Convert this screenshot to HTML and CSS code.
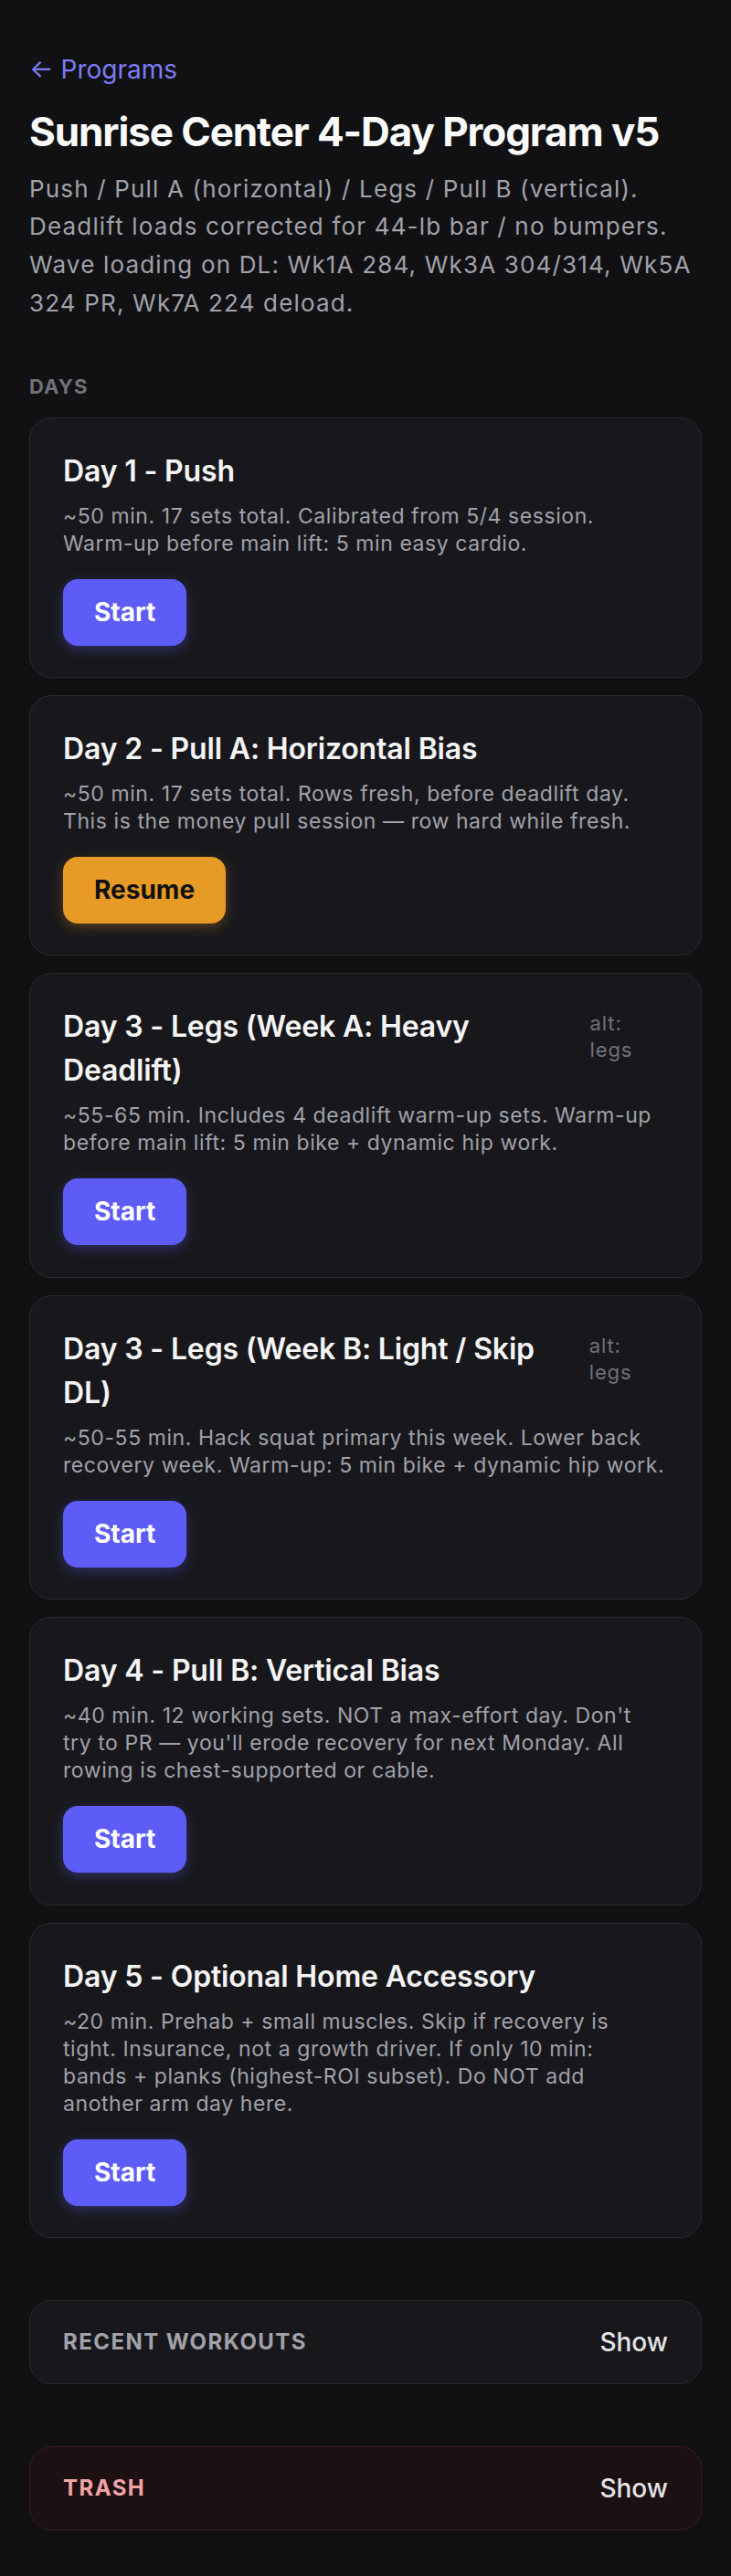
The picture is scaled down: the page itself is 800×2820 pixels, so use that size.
FILE: index.html
```html
<!DOCTYPE html>
<html lang="en">
<head>
<meta charset="utf-8">
<title>Sunrise Center 4-Day Program v5</title>
<link rel="stylesheet" href="styles.css">
</head>
<body>
<main class="page">
  <a class="back" href="#">← Programs</a>
  <h1 class="title">Sunrise Center 4-Day Program v5</h1>
  <p class="intro">Push / Pull A (horizontal) / Legs / Pull B (vertical). Deadlift loads corrected for 44-lb bar / no bumpers. Wave loading on DL: Wk1A 284, Wk3A 304/314, Wk5A 324 PR, Wk7A 224 deload.</p>

  <section class="days">
    <h2 class="section-label">DAYS</h2>
    <div class="day-list">
      <article class="day-card">
        <div class="day-head"><h3 class="day-title">Day 1 - Push</h3></div>
        <p class="day-desc">~50 min. 17 sets total. Calibrated from 5/4 session.<br>Warm-up before main lift: 5 min easy cardio.</p>
        <button class="btn btn-start">Start</button>
      </article>
      <article class="day-card">
        <div class="day-head"><h3 class="day-title">Day 2 - Pull A: Horizontal Bias</h3></div>
        <p class="day-desc">~50 min. 17 sets total. Rows fresh, before deadlift day.<br>This is the money pull session — row hard while fresh.</p>
        <button class="btn btn-resume">Resume</button>
      </article>
      <article class="day-card">
        <div class="day-head"><h3 class="day-title">Day 3 - Legs (Week A: Heavy Deadlift)</h3><span class="alt">alt: legs</span></div>
        <p class="day-desc">~55-65 min. Includes 4 deadlift warm-up sets. Warm-up<br>before main lift: 5 min bike + dynamic hip work.</p>
        <button class="btn btn-start">Start</button>
      </article>
      <article class="day-card">
        <div class="day-head"><h3 class="day-title">Day 3 - Legs (Week B: Light / Skip DL)</h3><span class="alt">alt: legs</span></div>
        <p class="day-desc">~50-55 min. Hack squat primary this week. Lower back<br>recovery week. Warm-up: 5 min bike + dynamic hip work.</p>
        <button class="btn btn-start">Start</button>
      </article>
      <article class="day-card">
        <div class="day-head"><h3 class="day-title">Day 4 - Pull B: Vertical Bias</h3></div>
        <p class="day-desc">~40 min. 12 working sets. NOT a max-effort day. Don't<br>try to PR — you'll erode recovery for next Monday. All<br>rowing is chest-supported or cable.</p>
        <button class="btn btn-start">Start</button>
      </article>
      <article class="day-card">
        <div class="day-head"><h3 class="day-title">Day 5 - Optional Home Accessory</h3></div>
        <p class="day-desc">~20 min. Prehab + small muscles. Skip if recovery is<br>tight. Insurance, not a growth driver. If only 10 min:<br>bands + planks (highest-ROI subset). Do NOT add<br>another arm day here.</p>
        <button class="btn btn-start">Start</button>
      </article>
    </div>
  </section>

  <section class="fold">
    <h2 class="fold-label">RECENT WORKOUTS</h2>
    <button class="fold-toggle">Show</button>
  </section>

  <section class="fold fold-trash">
    <h2 class="fold-label">TRASH</h2>
    <button class="fold-toggle">Show</button>
  </section>
</main>
</body>
</html>
```

FILE: styles.css
```css
* {
  box-sizing: border-box;
}

html, body {
  margin: 0;
  padding: 0;
  background: #111113;
}

body {
  font-family: Inter, "Noto Sans", "Liberation Sans", sans-serif;
  color: #f4f4f5;
  -webkit-font-smoothing: antialiased;
}

.page {
  padding: 55px 32px 51px;
  display: flex;
  flex-direction: column;
}

.back {
  align-self: flex-start;
  font-size: 28px;
  line-height: 42px;
  color: #7b7cf3;
  text-decoration: none;
}

.title {
  margin: 21px 0 0;
  font-size: 44px;
  line-height: 52.8px;
  font-weight: 700;
  letter-spacing: -0.025em;
  color: #fafafa;
}

.intro {
  margin: 15px 0 0;
  font-size: 26px;
  line-height: 41.6px;
  letter-spacing: 0.045em;
  color: #a1a1aa;
}

.days {
  margin-top: 55px;
}

.section-label {
  margin: 0;
  font-size: 22px;
  line-height: 33px;
  font-weight: 700;
  letter-spacing: 0.05em;
  color: #71717a;
}

.day-list {
  margin-top: 16.5px;
  display: flex;
  flex-direction: column;
  gap: 19px;
}

.day-card {
  background: #18181c;
  border: 1px solid #2a2a2f;
  border-radius: 24px;
  padding: 34px 36px 34.4px;
  display: flex;
  flex-direction: column;
  align-items: flex-start;
}

.day-head {
  display: flex;
  gap: 16px;
  width: 100%;
  justify-content: space-between;
  align-items: flex-start;
}

.day-title {
  margin: 0;
  font-size: 32px;
  line-height: 48px;
  font-weight: 600;
  letter-spacing: -0.005em;
  color: #f4f4f5;
}

.alt {
  font-size: 22px;
  line-height: 29px;
  letter-spacing: 0.04em;
  color: #71717a;
  margin-top: 6px;
}

.day-desc {
  margin: 10px 0 0;
  font-size: 23px;
  line-height: 30px;
  letter-spacing: 0.025em;
  color: #a1a1aa;
}

.btn {
  margin-top: 24px;
  border: none;
  border-radius: 16px;
  font-family: inherit;
  font-size: 28px;
  line-height: 41px;
  font-weight: 700;
  padding: 16px 34px;
  cursor: pointer;
}

.btn-start {
  background: #5e5cf6;
  color: #ffffff;
  box-shadow: 0 4px 14px rgba(94, 92, 246, 0.35);
}

.btn-resume {
  background: #e89a27;
  color: #111111;
  box-shadow: 0 4px 14px rgba(232, 154, 39, 0.3);
}

.fold {
  margin-top: 68px;
  display: flex;
  justify-content: space-between;
  align-items: center;
  background: #18181c;
  border: 1px solid #2a2a2f;
  border-radius: 24px;
  padding: 24px 36px;
}

.fold-label {
  margin: 0;
  font-size: 24px;
  line-height: 42px;
  font-weight: 700;
  letter-spacing: 0.06em;
  color: #a1a1aa;
}

.fold-toggle {
  background: none;
  border: none;
  padding: 0;
  font-family: inherit;
  font-size: 28px;
  line-height: 42px;
  font-weight: 500;
  color: #e4e4e7;
  cursor: pointer;
}

.fold-trash {
  background: #1c1013;
  border-color: #3b1c21;
}

.fold-trash .fold-label {
  color: #f2a3a6;
}
```
